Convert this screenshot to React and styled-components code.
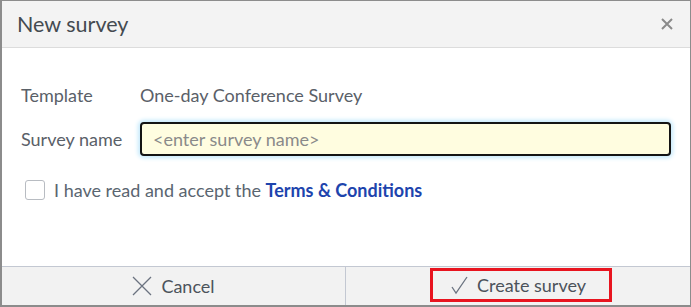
import React, { useState } from 'react';
import styled, { createGlobalStyle } from 'styled-components';

const GlobalStyle = createGlobalStyle`
  html, body {
    margin: 0;
    padding: 0;
    background: #ffffff;
  }
  body {
    font-family: Lato, "Noto Sans", "Liberation Sans", sans-serif;
  }
`;

const Dialog = styled.div`
  box-sizing: border-box;
  width: 691px;
  height: 307px;
  display: flex;
  flex-direction: column;
  border: 1px solid #8c8c8c;
  border-left-width: 2px;
  border-bottom-width: 2px;
  background: #ffffff;
`;

const Header = styled.div`
  height: 46px;
  display: flex;
  align-items: center;
  justify-content: space-between;
  padding: 0 17px 0 15px;
  background: #f3f3f3;
  border-bottom: 1px solid #dcdcdc;
`;

const Title = styled.h1`
  margin: 0;
  font-size: 21.5px;
  font-weight: 400;
  color: #444a50;
`;

const CloseButton = styled.button`
  border: none;
  background: none;
  padding: 0;
  display: flex;
  cursor: pointer;
  color: #8a8a8a;
`;

const Body = styled.div`
  flex: 1;
  padding: 36px 19px 0 19px;
  display: flex;
  flex-direction: column;
`;

const Row = styled.div`
  display: grid;
  grid-template-columns: 119px 1fr;
  align-items: center;
  margin-bottom: ${(p) => p.gap || 0}px;
  font-size: 18px;
  color: #5a6068;
`;

const Value = styled.span`
  color: #5a6068;
`;

const NameInput = styled.input`
  box-sizing: border-box;
  height: 34px;
  width: 531px;
  padding: 0 11px;
  font-family: inherit;
  font-size: 18px;
  color: #333;
  background: #fffde0;
  border: 2px solid #141414;
  border-radius: 4px;
  box-shadow: 0 0 4px 2px #c4e9fb;
  outline: none;
  caret-color: #000;

  &::placeholder {
    color: #8a8a8a;
  }
`;

const CheckRow = styled.label`
  display: flex;
  align-items: center;
  gap: 9px;
  margin-top: 23px;
  margin-left: 4px;
  font-size: 18px;
  color: #5a6570;
  cursor: pointer;
`;

const Box = styled.span`
  box-sizing: border-box;
  width: 20px;
  height: 20px;
  border: 1px solid #b8bcc2;
  border-radius: 3px;
  background: #fff;
  display: flex;
  align-items: center;
  justify-content: center;
`;

const Link = styled.a`
  color: #1d44ad;
  font-weight: 700;
  text-decoration: none;
`;

const Footer = styled.div`
  height: 38px;
  display: grid;
  grid-template-columns: 343px 1fr;
  background: #f2f2f2;
  border-top: 1px solid #c3c8d2;
`;

const FooterButton = styled.button`
  display: flex;
  align-items: center;
  justify-content: center;
  border: none;
  border-left: ${(p) => (p.divider ? '1px solid #c3c8d2' : 'none')};
  background: transparent;
  font-family: inherit;
  font-size: 18px;
  color: #4c535b;
  cursor: pointer;
  padding: 0;
`;

const ButtonInner = styled.span`
  display: flex;
  align-items: center;
  gap: 9px;
  padding: ${(p) => (p.outlined ? '0 23px 0 18px' : '0')};
  height: 34px;
  box-sizing: border-box;
  border: ${(p) => (p.outlined ? '3px solid #e8141f' : 'none')};
  margin: ${(p) => (p.outlined ? '-3px 0 0 6px' : '0')};
`;

export default function App() {
  const [name, setName] = useState('');
  const [accepted, setAccepted] = useState(false);

  return (
    <>
      <GlobalStyle />
      <Dialog>
        <Header>
          <Title>New survey</Title>
          <CloseButton aria-label="Close">
            <svg width="12" height="12" viewBox="0 0 12 12">
              <path d="M1 1 L11 11 M11 1 L1 11" stroke="currentColor" strokeWidth="2" />
            </svg>
          </CloseButton>
        </Header>
        <Body>
          <Row gap={16}>
            <span>Template</span>
            <Value>One-day Conference Survey</Value>
          </Row>
          <Row>
            <span>Survey name</span>
            <NameInput
              placeholder="<enter survey name>"
              value={name}
              onChange={(e) => setName(e.target.value)}
              autoFocus
            />
          </Row>
          <CheckRow onClick={() => setAccepted(!accepted)}>
            <Box>
              {accepted && (
                <svg width="12" height="12" viewBox="0 0 12 12">
                  <path d="M2 6 L5 9 L10 3" stroke="#1d44ad" strokeWidth="2" fill="none" />
                </svg>
              )}
            </Box>
            <span>
              I have read and accept the <Link href="#">Terms &amp; Conditions</Link>
            </span>
          </CheckRow>
        </Body>
        <Footer>
          <FooterButton>
            <ButtonInner>
              <svg width="20" height="20" viewBox="0 0 20 20">
                <path d="M1 1 L19 19 M19 1 L1 19" stroke="#6b7380" strokeWidth="1.3" />
              </svg>
              Cancel
            </ButtonInner>
          </FooterButton>
          <FooterButton divider>
            <ButtonInner outlined>
              <svg width="17" height="20" viewBox="0 0 17 20">
                <path d="M1 12 L5 18 L16 2" stroke="#6b7380" strokeWidth="1.3" fill="none" />
              </svg>
              Create survey
            </ButtonInner>
          </FooterButton>
        </Footer>
      </Dialog>
    </>
  );
}
